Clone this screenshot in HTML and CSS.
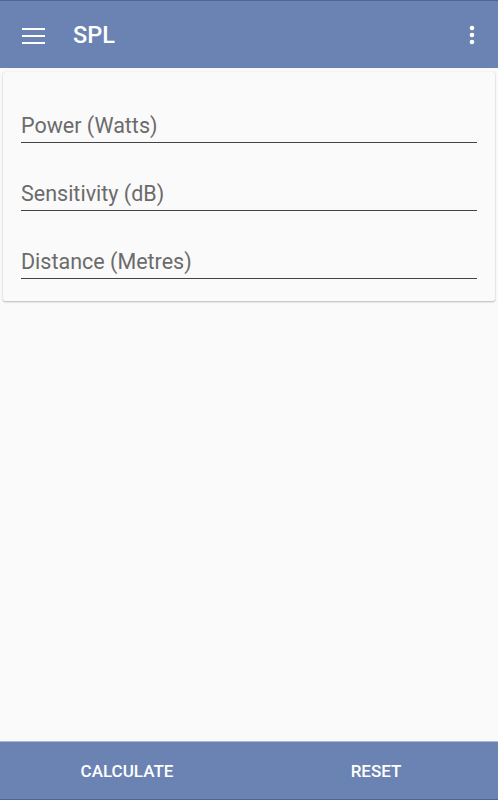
FILE: index.html
```html
<!DOCTYPE html>
<html>
<head>
<meta charset="utf-8">
<link rel="stylesheet" href="styles.css">
</head>
<body>
<div class="app">
  <header class="toolbar">
    <button class="icon-btn menu" aria-label="menu">
      <svg width="24" height="24" viewBox="0 0 24 24"><rect x="0" y="5" width="23" height="2" fill="#fff"/><rect x="0" y="12" width="23" height="2" fill="#fff"/><rect x="0" y="19" width="23" height="2" fill="#fff"/></svg>
    </button>
    <h1 class="title">SPL</h1>
    <button class="icon-btn more" aria-label="more">
      <svg width="8" height="20" viewBox="0 0 8 20"><circle cx="4" cy="3" r="2.3" fill="#fff"/><circle cx="4" cy="10" r="2.3" fill="#fff"/><circle cx="4" cy="17" r="2.3" fill="#fff"/></svg>
    </button>
  </header>
  <main class="content">
    <section class="card">
      <div class="field"><span class="label">Power (Watts)</span></div>
      <div class="field"><span class="label">Sensitivity (dB)</span></div>
      <div class="field"><span class="label">Distance (Metres)</span></div>
    </section>
  </main>
  <footer class="bottombar">
    <button class="action">CALCULATE</button>
    <button class="action">RESET</button>
  </footer>
</div>
</body>
</html>
```
FILE: styles.css
```css
* { box-sizing: border-box; }
html, body { margin: 0; padding: 0; height: 100%; }
body {
  background: #fafafa;
  font-family: Roboto, "Noto Sans", sans-serif;
}
.app {
  display: flex;
  flex-direction: column;
  height: 800px;
}
.toolbar {
  height: 68px;
  flex: none;
  background: #6b83b3;
  border-top: 1px solid #4f6592;
  display: flex;
  align-items: center;
  padding: 0 14px 0 22px;
}
.icon-btn {
  background: none;
  border: 0;
  padding: 0;
  display: flex;
}
.menu { margin-top: 1px; }
.title {
  margin: 0 0 0 27px;
  color: #fff;
  font-size: 23.5px;
  font-weight: 500;
  flex: 1;
}
.more { margin-right: 8px; margin-top: 1px; }
.content {
  flex: 1;
  padding: 4px 3px;
}
.card {
  background: #fafafa;
  border-radius: 2px;
  box-shadow: 0 1px 2px rgba(0,0,0,0.25), 0 0 1px rgba(0,0,0,0.15);
  padding: 3px 18px 22px 18px;
}
.field {
  height: 68px;
  display: flex;
  align-items: flex-end;
  border-bottom: 1px solid #444;
  padding: 0 0 4px 0;
}
.label {
  font-size: 21.5px;
  color: #6b6b6b;
  line-height: 24px;
}
.bottombar {
  height: 59px;
  flex: none;
  background: #6b83b3;
  border-top: 1px solid #aab8d2;
  border-bottom: 1px solid #4f6592;
  display: grid;
  grid-template-columns: 1fr 1fr;
}
.action {
  background: none;
  border: 0;
  color: #fff;
  font-family: Roboto, sans-serif;
  font-size: 17px;
  font-weight: 500;
  padding: 0 0 0 5px;
}
```
